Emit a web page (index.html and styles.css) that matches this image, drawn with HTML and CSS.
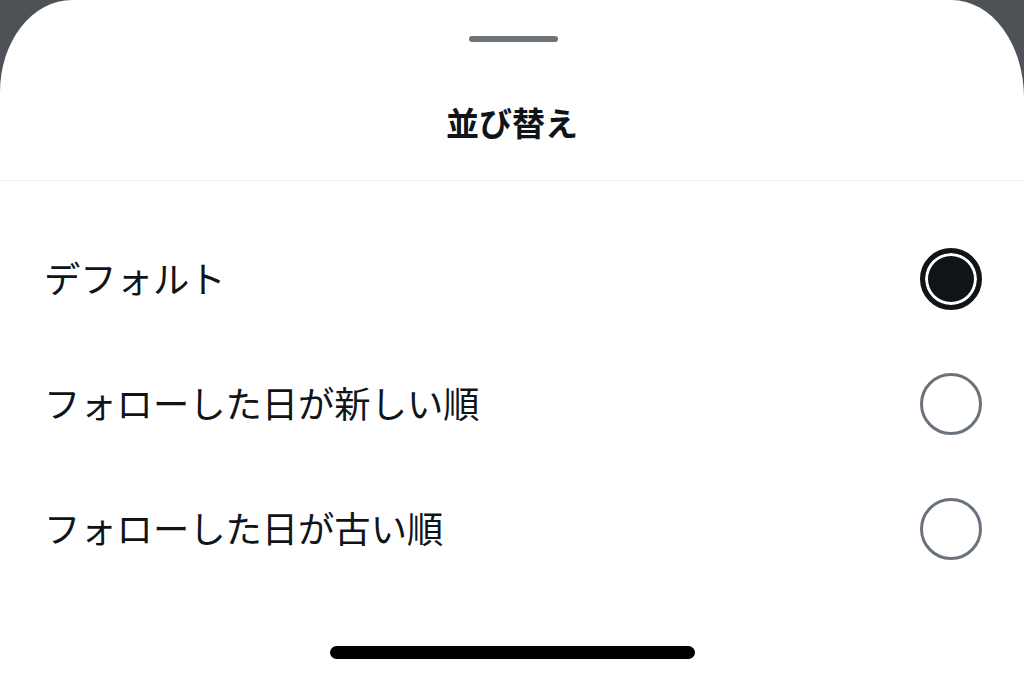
FILE: index.html
```html
<!DOCTYPE html>
<html lang="ja">
<head>
<meta charset="utf-8">
<title>並び替え</title>
<link rel="stylesheet" href="styles.css">
</head>
<body>
<div class="sheet">
  <div class="handle"></div>
  <header class="sheet-header">
    <h1 class="title">並び替え</h1>
  </header>
  <ul class="options">
    <li class="option">
      <span class="label">デフォルト</span>
      <span class="radio radio-checked"></span>
    </li>
    <li class="option">
      <span class="label">フォローした日が新しい順</span>
      <span class="radio"></span>
    </li>
    <li class="option">
      <span class="label">フォローした日が古い順</span>
      <span class="radio"></span>
    </li>
  </ul>
  <div class="home-indicator"></div>
</div>
</body>
</html>
```
FILE: styles.css
```css
html, body {
  margin: 0;
  padding: 0;
  height: 100%;
}
body {
  background: #4e5256;
  font-family: "Noto Sans CJK JP", "Noto Sans", sans-serif;
  color: #0f1419;
  overflow: hidden;
}
.sheet {
  background: #fff;
  height: 680px;
  border-top-left-radius: 72px 92px;
  border-top-right-radius: 72px 98px;
  display: flex;
  flex-direction: column;
  align-items: stretch;
  padding-top: 36px;
  box-sizing: border-box;
}
.handle {
  align-self: center;
  width: 89px;
  height: 6px;
  border-radius: 3px;
  background: #6e7378;
  margin-left: 3px;
}
.sheet-header {
  padding: 60px 0 38px;
  border-bottom: 1px solid #eff3f4;
  text-align: center;
}
.title {
  margin: 0;
  font-size: 33px;
  line-height: 40px;
  font-weight: 700;
}
.options {
  list-style: none;
  margin: 0;
  padding: 35px 0 0;
}
.option {
  height: 125px;
  display: flex;
  align-items: center;
  justify-content: space-between;
  padding: 0 42px 0 44px;
}
.label {
  font-size: 36.3px;
  line-height: 44px;
  font-weight: 400;
  margin-top: -4px;
}
.radio {
  width: 62px;
  height: 62px;
  box-sizing: border-box;
  border-radius: 50%;
  border: 3.5px solid #6a737c;
}
.radio-checked {
  border: 5px solid #0f1419;
  background: #0f1419;
  box-shadow: inset 0 0 0 3px #fff;
}
.home-indicator {
  align-self: center;
  width: 365px;
  height: 13px;
  border-radius: 7px;
  background: #000;
  margin-top: 55px;
  margin-left: 1px;
}
```
